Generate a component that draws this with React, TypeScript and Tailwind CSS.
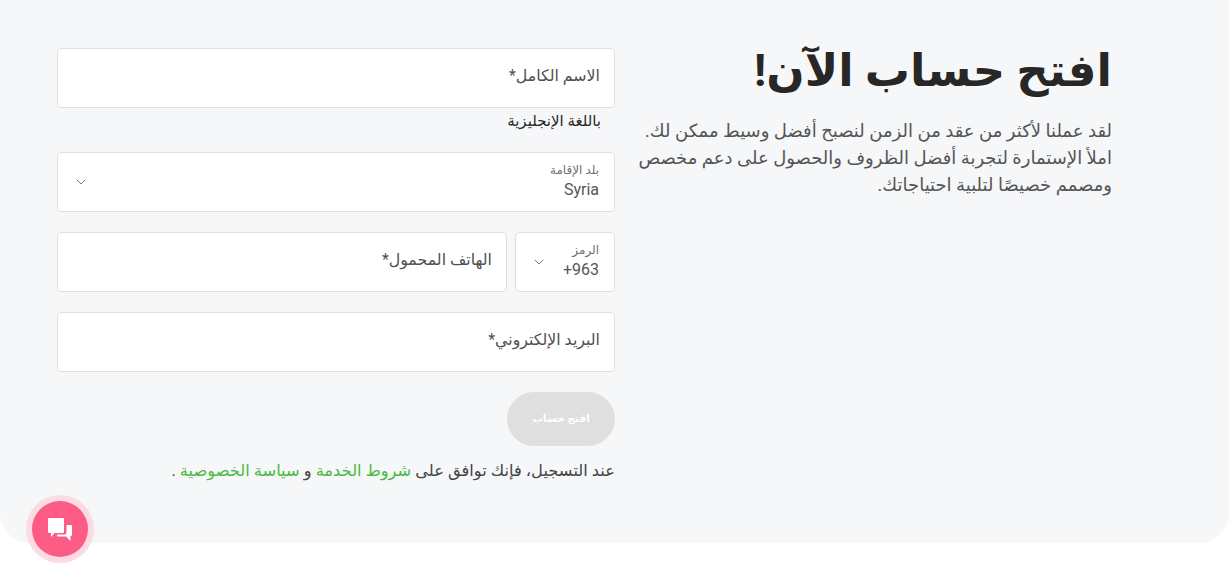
import React from 'react';
import { ChevronDown } from 'lucide-react';

const FONT = "font-['Roboto','DejaVu_Sans',sans-serif]";

const TextField = ({ label, className = '' }: { label: string; className?: string }) => (
  <div className={`h-[60px] bg-white border border-[#dcdee0] rounded-[5px] flex items-center px-[14px] pb-[4px] text-[15.800px] text-[#4f4f4f] ${className}`}>
    {label}
  </div>
);

const SelectField = ({ label, value, className = '' }: { label: string; value: string; className?: string }) => (
  <div className={`h-[60px] bg-white border border-[#dcdee0] rounded-[5px] flex items-center justify-between pr-[15px] pl-[15px] ${className}`}>
    <div className="flex flex-col">
      <span className="text-[12px] leading-[15px] text-[#6f6f6f]">{label}</span>
      <span className="text-[16px] leading-[24px] text-[#555555] text-right" dir="ltr">{value}</span>
    </div>
    <ChevronDown size={16} strokeWidth={1.2} className="text-[#555555]" />
  </div>
);

export default function App() {
  return (
    <div dir="rtl" className={`${FONT} relative min-h-[587px] bg-white overflow-hidden`}>
      <div className="h-[543px] bg-[#f6f7f9] rounded-b-[30px] flex gap-[22px] pr-[117px] pl-[57px] pt-[48px]">
        <div className="w-[475px] shrink-0">
          <h1 className="text-[45px] leading-[46px] font-bold text-[#272727]">افتح حساب الآن!</h1>
          <p className="mt-[23px] text-[18px] leading-[27px] text-[#555555] whitespace-nowrap">
            لقد عملنا لأكثر من عقد من الزمن لنصبح أفضل وسيط ممكن لك.
            <br />
            املأ الإستمارة لتجربة أفضل الظروف والحصول على دعم مخصص
            <br />
            ومصمم خصيصًا لتلبية احتياجاتك.
          </p>
        </div>

        <div className="w-[558px] shrink-0">
          <TextField label="الاسم الكامل*" />
          <p className="mt-[4px] pr-[14px] text-[15px] leading-[18px] text-[#272727]">باللغة الإنجليزية</p>
          <SelectField label="بلد الإقامة" value="Syria" className="mt-[22px]" />
          <div className="mt-[20px] flex gap-[8px]">
            <SelectField label="الرمز" value="+963" className="w-[100px] shrink-0" />
            <TextField label="الهاتف المحمول*" className="flex-1" />
          </div>
          <TextField label="البريد الإلكتروني*" className="mt-[20px]" />
          <button className="mt-[20px] block w-[108px] h-[54px] rounded-full bg-[#dfdfdf] text-white text-[10.500px] font-bold">
            افتح حساب
          </button>
          <p className="mt-[15px] text-[16.300px] leading-[20px] text-[#444444]">
            عند التسجيل، فإنك توافق على <span className="text-[#4cb944]">شروط الخدمة</span> و <span className="text-[#4cb944]">سياسة الخصوصية</span> .
          </p>
        </div>
      </div>

      {/* Chat button sits over the panel edge */}
      <div className="absolute left-[26px] top-[495px] w-[68px] h-[68px] rounded-full bg-[#fcdbe3] flex items-center justify-center">
        <div className="w-[56px] h-[56px] rounded-full bg-[#fb5b84] flex items-center justify-center">
          <svg width="24" height="23" viewBox="0 0 24 23" fill="white">
            <path d="M1 0H15a1 1 0 0 1 1 1V14a1 1 0 0 1-1 1H6.500L3 19V15H1a1 1 0 0 1-1-1V1a1 1 0 0 1 1-1z" />
            <path d="M18.500 7H23a1 1 0 0 1 1 1V17a1 1 0 0 1-1 1H22.500V23L18 18.500H10a1 1 0 0 1-1-1V16.500H16.500a2 2 0 0 0 2-2z" />
          </svg>
        </div>
      </div>
    </div>
  );
}
